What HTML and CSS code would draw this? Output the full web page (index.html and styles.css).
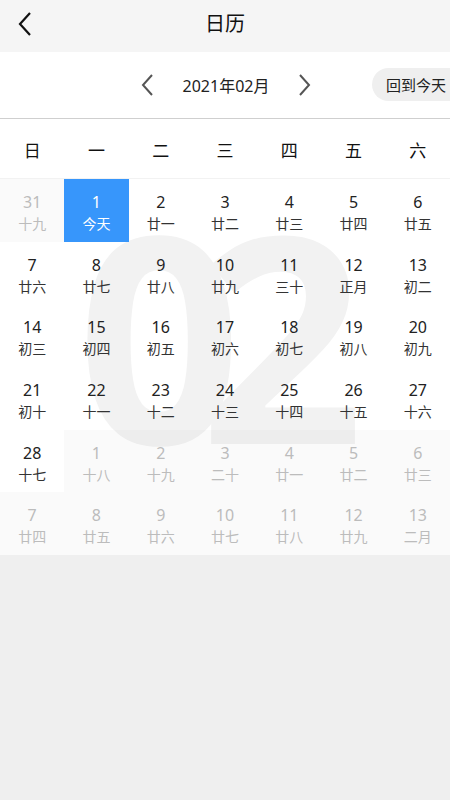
FILE: index.html
```html
<!DOCTYPE html>
<html lang="zh">
<head>
<meta charset="utf-8">
<title>日历</title>
<link rel="stylesheet" href="styles.css">
</head>
<body>
<header class="topbar">
  <button class="back" aria-label="返回">
    <svg width="16" height="26" viewBox="0 0 16 26"><path d="M13 2 L3 13 L13 24" fill="none" stroke="#111" stroke-width="2.2"/></svg>
  </button>
  <h1 class="title">日历</h1>
</header>
<section class="toolbar">
  <div class="nav">
    <svg class="arrow" width="14" height="24" viewBox="0 0 14 24"><path d="M12 2 L3 12 L12 22" fill="none" stroke="#555" stroke-width="2"/></svg>
    <span class="month">2021年02月</span>
    <svg class="arrow" width="14" height="24" viewBox="0 0 14 24"><path d="M2 2 L11 12 L2 22" fill="none" stroke="#555" stroke-width="2"/></svg>
  </div>
  <button class="today-btn">回到今天</button>
</section>
<div class="weekdays">
  <span>日</span><span>一</span><span>二</span><span>三</span><span>四</span><span>五</span><span>六</span>
</div>
<div class="grid">
  <div class="watermark" aria-hidden="true">02</div>
  <div class="cell other"><b>31</b><i>十九</i></div>
  <div class="cell today"><b>1</b><i>今天</i></div>
  <div class="cell"><b>2</b><i>廿一</i></div>
  <div class="cell"><b>3</b><i>廿二</i></div>
  <div class="cell"><b>4</b><i>廿三</i></div>
  <div class="cell"><b>5</b><i>廿四</i></div>
  <div class="cell"><b>6</b><i>廿五</i></div>

  <div class="cell"><b>7</b><i>廿六</i></div>
  <div class="cell"><b>8</b><i>廿七</i></div>
  <div class="cell"><b>9</b><i>廿八</i></div>
  <div class="cell"><b>10</b><i>廿九</i></div>
  <div class="cell"><b>11</b><i>三十</i></div>
  <div class="cell"><b>12</b><i>正月</i></div>
  <div class="cell"><b>13</b><i>初二</i></div>

  <div class="cell"><b>14</b><i>初三</i></div>
  <div class="cell"><b>15</b><i>初四</i></div>
  <div class="cell"><b>16</b><i>初五</i></div>
  <div class="cell"><b>17</b><i>初六</i></div>
  <div class="cell"><b>18</b><i>初七</i></div>
  <div class="cell"><b>19</b><i>初八</i></div>
  <div class="cell"><b>20</b><i>初九</i></div>

  <div class="cell"><b>21</b><i>初十</i></div>
  <div class="cell"><b>22</b><i>十一</i></div>
  <div class="cell"><b>23</b><i>十二</i></div>
  <div class="cell"><b>24</b><i>十三</i></div>
  <div class="cell"><b>25</b><i>十四</i></div>
  <div class="cell"><b>26</b><i>十五</i></div>
  <div class="cell"><b>27</b><i>十六</i></div>

  <div class="cell"><b>28</b><i>十七</i></div>
  <div class="cell other"><b>1</b><i>十八</i></div>
  <div class="cell other"><b>2</b><i>十九</i></div>
  <div class="cell other"><b>3</b><i>二十</i></div>
  <div class="cell other"><b>4</b><i>廿一</i></div>
  <div class="cell other"><b>5</b><i>廿二</i></div>
  <div class="cell other"><b>6</b><i>廿三</i></div>

  <div class="cell other"><b>7</b><i>廿四</i></div>
  <div class="cell other"><b>8</b><i>廿五</i></div>
  <div class="cell other"><b>9</b><i>廿六</i></div>
  <div class="cell other"><b>10</b><i>廿七</i></div>
  <div class="cell other"><b>11</b><i>廿八</i></div>
  <div class="cell other"><b>12</b><i>廿九</i></div>
  <div class="cell other"><b>13</b><i>二月</i></div>
</div>
</body>
</html>
```
FILE: styles.css
```css
* { box-sizing: border-box; }
html, body { margin: 0; padding: 0; }
body {
  width: 450px;
  height: 800px;
  background: #efefef;
  font-family: "Noto Sans", "Noto Sans CJK SC", sans-serif;
  color: #222;
  overflow: hidden;
}
.topbar {
  height: 52px;
  background: #f5f5f5;
  display: flex;
  align-items: center;
  justify-content: center;
  position: relative;
}
.back {
  position: absolute;
  left: 17px;
  top: 11px;
  border: 0;
  background: none;
  padding: 0;
  width: 16px;
  height: 26px;
}
.back svg { display: block; }
.title {
  margin: 0;
  font-size: 20px;
  font-weight: 400;
  font-family: "Noto Sans CJK SC", sans-serif;
  color: #111;
  line-height: 1;
  margin-top: -6px;
}
.toolbar {
  height: 67px;
  background: #fff;
  border-bottom: 1px solid #cfcfcf;
  display: flex;
  align-items: center;
  justify-content: center;
  position: relative;
}
.nav {
  display: flex;
  align-items: center;
}
.arrow { display: block; }
.month {
  font-size: 16px;
  color: #222;
  width: 144px;
  text-align: center;
  font-family: "Noto Sans", "Noto Sans CJK SC", sans-serif;
}
.nav .arrow:first-child { margin-left: 2px; }
.today-btn {
  position: absolute;
  right: -20px;
  top: 16px;
  height: 33px;
  padding: 0 24px 0 14px;
  border: 0;
  border-radius: 17px;
  background: #efefef;
  font-family: "Noto Sans CJK SC", sans-serif;
  font-size: 15px;
  color: #222;
}
.weekdays {
  height: 60px;
  background: #fff;
  display: grid;
  grid-template-columns: repeat(7, 1fr);
  align-items: center;
  border-bottom: 1px solid #f2f2f2;
}
.weekdays span {
  text-align: center;
  font-family: "Noto Sans CJK SC", sans-serif;
  font-size: 17px;
  color: #111;
  padding-top: 2px;
}
.grid {
  position: relative;
  background: #fff;
  display: grid;
  grid-template-columns: repeat(7, 1fr);
  grid-template-rows: repeat(6, 62.7px);
  overflow: hidden;
}
.watermark {
  position: absolute;
  left: 77px;
  top: 9px;
  font-family: "Open Sans", "Noto Sans", sans-serif;
  font-weight: 700;
  font-size: 288px;
  line-height: 1;
  letter-spacing: -42px;
  color: #f2f2f2;
  z-index: 0;
  pointer-events: none;
}
.cell {
  position: relative;
  z-index: 1;
  display: flex;
  flex-direction: column;
  align-items: center;
  justify-content: center;
  padding-top: 4px;
}
.cell b {
  font-weight: 400;
  font-size: 16px;
  line-height: 21px;
  color: #222;
}
.cell i {
  font-style: normal;
  font-family: "Noto Sans CJK SC", sans-serif;
  font-size: 14px;
  line-height: 20px;
  color: #333;
}
.cell.other { background: rgba(0, 0, 0, 0.02); }
.cell.other b, .cell.other i { color: #bcbcbc; }
.cell.today { background: #3796fb; }
.cell.today b, .cell.today i { color: #fff; }
```
